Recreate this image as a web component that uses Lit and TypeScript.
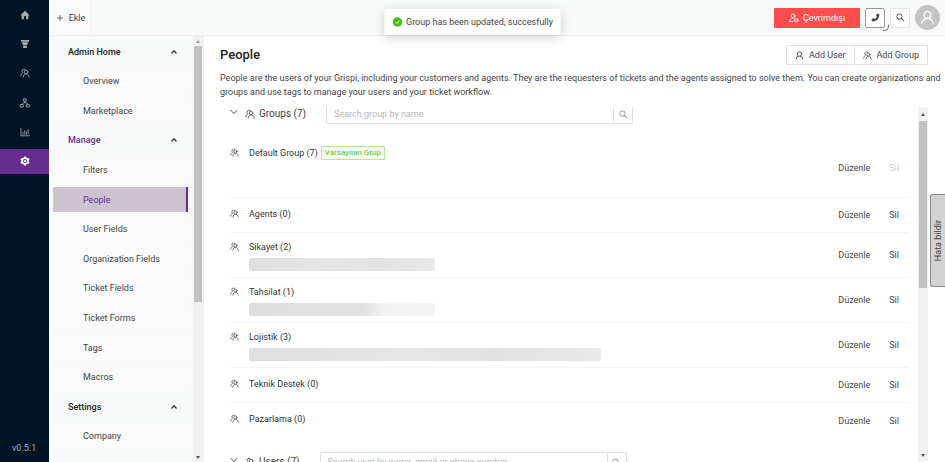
import { LitElement, html, svg, css, nothing } from "lit";
import { customElement, property } from "lit/decorators.js";
import { classMap } from "lit/directives/class-map.js";

const line = (body: unknown) => svg`<g fill="none" stroke="currentColor" stroke-width="1.3" stroke-linecap="round" stroke-linejoin="round">${body}</g>`;

const icons: Record<string, { box: string; body: unknown }> = {
  home: { box: "0 0 16 16", body: svg`<path fill="currentColor" d="M8 1.2 15.4 8.3H13.4V14.6H9.7V10H6.3V14.6H2.6V8.3H.6Z"/>` },
  filter: { box: "0 0 16 16", body: svg`<path fill="currentColor" d="M1 1.500H15L14 4.500H2ZM2.500 5.200H13.500L11 9.600H5ZM5 10.200H11V14.500H5Z"/>` },
  group: {
    box: "0 0 16 16",
    body: line(svg`<circle cx="9.600" cy="6.400" r="2.900"/><path d="M5.200 14.600C5.400 11.400 7 9.300 9.600 9.300S14.400 11.400 14.800 14.600"/><path d="M8.600 2.500A3.200 3.200 0 1 0 4.500 7.500C2.600 8.600 1.500 10.300 1.300 12.800"/>`),
  },
  tree: {
    box: "0 0 16 16",
    body: line(svg`<rect x="6" y="1.400" width="4" height="3.600"/><rect x="1.200" y="10.600" width="4" height="3.800"/><rect x="10.800" y="10.600" width="4" height="3.800"/><path d="M8 5V7.600M3.200 10.600 5.500 7.600H10.500L12.800 10.600"/>`),
  },
  chart: { box: "0 0 16 16", body: line(svg`<path d="M1.500 2V14H15M4.800 11.500V8.500M7.600 11.500V6M10.300 11.500V7.500M13 11.500V4.500"/>`) },
  gear: {
    box: "0 0 16 16",
    body: svg`<path fill="currentColor" fill-rule="evenodd" d="M6.300.8H9.700L10.200 2.900 11.600 3.700 13.600 3.100 15.300 6 13.800 7.400V8.600L15.300 10 13.600 12.900 11.600 12.300 10.200 13.100 9.700 15.200H6.300L5.800 13.100 4.400 12.300 2.400 12.900.7 10 2.200 8.600V7.400L.7 6 2.400 3.100 4.400 3.700 5.800 2.900ZM8 4.900A3.100 3.100 0 1 0 8 11.100 3.100 3.100 0 1 0 8 4.900ZM8 6.300A1.700 1.700 0 1 1 8 9.700 1.700 1.700 0 1 1 8 6.300Z"/>`,
  },
  plus: { box: "0 0 16 16", body: svg`<path fill="none" stroke="currentColor" stroke-width="1.600" d="M8 2V14M2 8H14"/>` },
  up: { box: "0 0 16 16", body: svg`<path fill="none" stroke="currentColor" stroke-width="2.400" d="M3 11 8 5.500 13 11"/>` },
  down: { box: "0 0 16 16", body: svg`<path fill="none" stroke="currentColor" stroke-width="1.800" d="M1.500 4 8 11.500 14.500 4"/>` },
  check: {
    box: "0 0 16 16",
    body: svg`<circle cx="8" cy="8" r="7.600" fill="currentColor"/><path d="M5 8.200 7.200 10.400 11 5.800" fill="none" stroke="#fff" stroke-width="1.400"/>`,
  },
  offline: {
    box: "0 0 16 16",
    body: line(svg`<circle cx="6.500" cy="4.600" r="3"/><path d="M1 13.600C1.200 10.200 3.200 8.200 6.500 8.200L7.700 8.400M1 13.600H6.500"/><circle cx="11.800" cy="11.600" r="2.800"/><path d="M10 13.400 13.600 9.800"/>`),
  },
  phone: {
    box: "0 0 16 16",
    body: svg`<path fill="currentColor" d="M10.700 1 14.600 1.900C14.900 6 13.900 9.300 11.600 11.700 9.200 14.200 6 15.200 1.800 14.800L.9 11.100 5 9.100 6.700 10.900C8.700 9.900 10 8.600 10.800 6.700L9 5Z"/>`,
  },
  search: {
    box: "64 64 896 896",
    body: svg`<path fill="currentColor" d="M909.600 854.500L649.900 594.800C690.200 542.700 712 479 712 412c0-80.200-31.300-155.400-87.900-212.100-56.600-56.700-132-87.900-212.100-87.900s-155.500 31.300-212.100 87.900C143.200 256.500 112 331.800 112 412c0 80.100 31.300 155.500 87.900 212.100C256.500 680.800 331.800 712 412 712c67 0 130.600-21.800 182.700-62l259.700 259.600a8.200 8.200 0 0011.600 0l43.600-43.500a8.200 8.200 0 000-11.600zM570.400 570.400C528 612.700 471.800 636 412 636s-116-23.300-158.400-65.600C211.300 528 188 471.800 188 412s23.300-116.100 65.600-158.400C296 211.300 352.200 188 412 188s116.100 23.200 158.400 65.600S636 352.200 636 412s-23.300 116.100-65.600 158.400z"/>`,
  },
  user: {
    box: "64 64 896 896",
    body: svg`<path fill="currentColor" d="M858.500 763.600a374 374 0 00-80.600-119.500 375.630 375.630 0 00-119.500-80.600c-.4-.2-.8-.3-1.200-.5C719.500 518 760 444.700 760 362c0-137-111-248-248-248S264 225 264 362c0 82.700 40.500 156 102.800 201.100-.4.2-.8.3-1.200.5-44.800 18.900-85 46-119.500 80.600a375.630 375.630 0 00-80.600 119.500A371.700 371.700 0 00136 901.800a8 8 0 008 8.200h60c4.400 0 7.900-3.500 8-7.800 2-77.200 33-149.500 87.800-204.300 56.700-56.700 132-87.900 212.200-87.900s155.500 31.200 212.200 87.900C779 752.700 810 825 812 902.200c.1 4.400 3.600 7.800 8 7.800h60a8 8 0 008-8.200c-1-47.800-10.900-94.300-29.500-138.200zM512 534c-45.900 0-89.100-17.900-121.600-50.400S340 407.900 340 362c0-45.900 17.900-89.100 50.400-121.600S466.100 190 512 190s89.100 17.900 121.600 50.400S684 316.100 684 362c0 45.900-17.900 89.100-50.400 121.600S557.900 534 512 534z"/>`,
  },
};

@customElement("ui-icon")
class UiIcon extends LitElement {
  @property() name = "home";
  static styles = css`
    :host { display: inline-flex; flex: none; width: 9px; height: 9px; }
    svg { width: 100%; height: 100%; display: block; }
  `;
  render() {
    const icon = icons[this.name];
    return html`<svg viewBox=${icon.box} aria-hidden="true">${icon.body}</svg>`;
  }
}

@customElement("scroll-bar")
class ScrollBar extends LitElement {
  @property({ type: Number }) thumb = 50;
  static styles = css`
    :host { display: flex; flex-direction: column; flex: none; width: 10px; background: #f1f1f1; }
    .arrow { display: flex; flex: none; height: var(--arrow-height, 10px); align-items: center; justify-content: center; }
    .arrow::before { content: ""; border: 2px solid transparent; }
    .up::before { border-top-width: 0; border-bottom: 3px solid var(--arrow-up, #505050); }
    .down::before { border-bottom-width: 0; border-top: 3px solid #505050; }
    .track { flex: 1; padding: 0 1px; }
    .thumb { background: #c1c1c1; }
  `;
  render() {
    return html`<div class="arrow up"></div>
      <div class="track"><div class="thumb" style="height:${this.thumb}%"></div></div>
      <div class="arrow down"></div>`;
  }
}

const rail = [
  ["home", "Home"],
  ["filter", "Filters"],
  ["group", "People"],
  ["tree", "Organizations"],
  ["chart", "Reports"],
  ["gear", "Admin"],
];

const menu: { label: string; head?: boolean; current?: boolean }[] = [
  { label: "Admin Home", head: true },
  { label: "Overview" },
  { label: "Marketplace" },
  { label: "Manage", head: true, current: true },
  { label: "Filters" },
  { label: "People", current: true },
  { label: "User Fields" },
  { label: "Organization Fields" },
  { label: "Ticket Fields" },
  { label: "Ticket Forms" },
  { label: "Tags" },
  { label: "Macros" },
  { label: "Settings", head: true },
  { label: "Company" },
];

const groups = [
  { name: "Default Group", count: 7, members: "", isDefault: true },
  { name: "Agents", count: 0, members: "" },
  { name: "Sikayet", count: 2, members: "short" },
  { name: "Tahsilat", count: 1, members: "short fade" },
  { name: "Lojistik", count: 3, members: "long" },
  { name: "Teknik Destek", count: 0, members: "" },
  { name: "Pazarlama", count: 0, members: "" },
];

@customElement("app-root")
class AppRoot extends LitElement {
  static styles = css`
    :host {
      display: flex; position: relative; height: 100vh; overflow: hidden; background: #fff;
      font: 9px/14px Roboto, sans-serif; color: #444;
    }
    * { box-sizing: border-box; }
    button, input { font: inherit; color: inherit; margin: 0; border-radius: 1px; }
    button { display: inline-flex; align-items: center; justify-content: center; padding: 0; border: 0; background: none; white-space: nowrap; }
    a { color: inherit; text-decoration: none; }
    ul { list-style: none; margin: 0; padding: 0; }

    .rail { display: flex; flex-direction: column; justify-content: space-between; flex: none; width: 49px; padding-top: 2px; background: #001428; color: #a6adb4; }
    .rail-nav { display: flex; flex-direction: column; justify-content: space-between; height: 172px; }
    .rail-link { display: flex; align-items: center; justify-content: center; height: 25px; }
    .rail-link ui-icon { width: 10px; height: 10px; }
    .rail-link.current { background: #662d91; color: #fff; }
    .version { padding: 0 0 7px 12px; }

    .page { display: flex; flex-direction: column; flex: 1; min-width: 0; }
    .top { display: flex; flex: none; justify-content: space-between; height: 36px; background: #f8f9f9; border-bottom: 1px solid #f0f0f0; }
    .add { gap: 5px; width: 42px; padding-left: 2px; background: #fafafa; border-right: 1px solid #f0f0f0; }
    .add ui-icon { width: 8px; height: 8px; }
    .tools { display: flex; align-items: center; gap: 5px; padding-right: 5px; }
    .status { gap: 4px; width: 86px; height: 20px; background: #ff4d4f; color: #fff; }
    .status ui-icon { width: 10px; height: 10px; }
    .square { width: 20px; height: 20px; background: #fff; border: 1px solid #e4e4e4; }
    .call { border-color: #999; border-radius: 2px; }
    .dial { position: relative; display: flex; }
    .dial::after { content: ""; position: absolute; right: -4px; bottom: -3px; width: 5px; height: 5px; border: solid #666; border-width: 0 1px 1px 0; border-radius: 0 0 5px 0; }
    .avatar { width: 25px; height: 25px; border-radius: 50%; background: #c4c4c4; color: #fff; }
    .avatar ui-icon { width: 15px; height: 15px; }

    .body { display: flex; flex: 1; min-height: 0; }
    .side { display: flex; flex: none; width: 154px; background: #f8faf9; }
    .side scroll-bar { --arrow-up: #999; }
    .menu { display: flex; flex-direction: column; justify-content: space-between; flex: 1; height: 413px; padding: 3px 5px 0 4px; }
    .item { display: flex; align-items: center; height: 25px; padding-left: 30px; background: #fafafa; }
    .item.current { color: #662d91; background: #cbc3d0; border-right: 2px solid #662d91; }
    .head { display: flex; justify-content: space-between; width: 100%; height: 25px; padding: 0 10px 0 15px; font-weight: 500; color: #222; }
    .head.current { color: #662d91; }
    .head ui-icon { width: 8px; height: 8px; color: #333; }

    main { display: flex; flex-direction: column; flex: 1; min-width: 0; padding: 9px 17px 0 16px; border-left: 1px solid #f0f0f0; }
    .title-row { display: flex; align-items: center; justify-content: space-between; }
    h1 { margin: 0; font-size: 13px; line-height: 18px; font-weight: 500; color: #222; }
    .actions { display: flex; }
    .outlined { gap: 5px; height: 20px; padding: 0 8px; background: #fff; border: 1px solid #e0e0e0; }
    .outlined + .outlined { margin-left: -1px; }
    .intro { margin: 6px -16px 8px 0; }
    .scroller { display: flex; flex: 1; min-height: 0; overflow: hidden; }
    .scroller scroll-bar { --arrow-height: 14px; }
    .list { flex: 1; min-width: 0; padding: 0 9px 0 10px; overflow: hidden; }
    .section { display: flex; align-items: center; height: 20px; font-size: 10px; }
    .first { margin: -3px 0 15px; }
    .last { margin-top: 14px; }
    .section > ui-icon { width: 10px; height: 10px; margin-left: 7px; }
    .toggle { align-self: flex-start; padding-top: 4px; }
    .toggle ui-icon { width: 8px; height: 8px; }
    .section label { margin: 0 20px 0 4px; }
    .search { display: flex; width: 307px; font-size: 9px; }
    .search input { flex: 1; min-width: 0; height: 20px; padding: 0 7px; border: 1px solid #e0e0e0; background: #fff; }
    .search input::placeholder { color: #b5b5b5; opacity: 1; }
    .search button { width: 20px; margin-left: -1px; border: 1px solid #e0e0e0; color: #888; }

    .group { display: flex; align-items: center; justify-content: space-between; height: 45px; border-bottom: 1px solid #f4f4f4; }
    .group.empty { height: 35px; }
    .group.default { height: 59px; }
    .group:last-child { border-bottom: 0; }
    .info { display: flex; gap: 10px; align-self: stretch; padding-top: 7px; }
    .empty .info { padding-top: 9px; }
    .info > ui-icon { margin-top: 2px; }
    .name { display: flex; align-items: center; gap: 3px; color: #333; }
    .tag { padding: 0 3px; font-size: 8px; line-height: 12px; color: #52c41a; background: #f6ffed; border: 1px solid #b7eb8f; border-radius: 1px; }
    .members { height: 13px; margin-top: 4px; border-radius: 2px; background: linear-gradient(90deg, #dfdfdf, #e6e6e6 45%, #e2e2e2 70%, #e9e9e9); }
    .members.short { width: 186px; }
    .members.fade { background: linear-gradient(90deg, #dedede, #e2e2e2 62%, #f2f2f2 72%, #f4f4f4); }
    .members.long { width: 352px; }
    .links { display: flex; gap: 19px; padding-right: 10px; }
    .links button:disabled { color: #ccc; }

    .toast { position: absolute; top: 9px; left: 50%; transform: translateX(-50%); display: flex; align-items: center; gap: 4px; height: 26px; padding: 0 8px; background: #fff; border-radius: 1px; box-shadow: 0 3px 12px rgba(0, 0, 0, .18); white-space: nowrap; }
    .toast ui-icon { width: 10px; height: 10px; color: #43c30f; }
    .feedback { position: absolute; top: 194px; right: 0; width: 15px; height: 93px; background: #d3d3d3; border: 1px solid #888; border-right: 0; border-radius: 3px 0 0 3px; }
    .feedback span { writing-mode: vertical-rl; transform: rotate(180deg); }
  `;

  private section(kind: string, label: string, hint: string) {
    return html`<div class="section ${kind}">
      <button class="toggle" aria-label="Toggle ${label}"><ui-icon name="down"></ui-icon></button>
      <ui-icon name="group"></ui-icon>
      <label for=${kind}>${label}</label>
      <div class="search">
        <input id=${kind} placeholder=${hint} />
        <button aria-label="Search"><ui-icon name="search"></ui-icon></button>
      </div>
    </div>`;
  }

  render() {
    return html`
      <aside class="rail">
        <nav class="rail-nav">
          ${rail.map(([icon, label]) => html`<a class=${classMap({ "rail-link": true, current: icon === "gear" })} href="#" aria-label=${label}><ui-icon name=${icon}></ui-icon></a>`)}
        </nav>
        <div class="version">v0.5.1</div>
      </aside>
      <div class="page">
        <header class="top">
          <button class="add"><ui-icon name="plus"></ui-icon>Ekle</button>
          <div class="tools">
            <button class="status"><ui-icon name="offline"></ui-icon>Çevrimdışı</button>
            <div class="dial"><button class="square call" aria-label="Call"><ui-icon name="phone"></ui-icon></button></div>
            <button class="square" aria-label="Search"><ui-icon name="search"></ui-icon></button>
            <button class="avatar" aria-label="Account"><ui-icon name="user"></ui-icon></button>
          </div>
        </header>
        <div class="body">
          <div class="side">
            <nav class="menu">
              ${menu.map((m) =>
                m.head
                  ? html`<button class=${classMap({ head: true, current: !!m.current })}>${m.label}<ui-icon name="up"></ui-icon></button>`
                  : html`<a class=${classMap({ item: true, current: !!m.current })} href="#">${m.label}</a>`
              )}
            </nav>
            <scroll-bar thumb="63"></scroll-bar>
          </div>
          <main>
            <div class="title-row">
              <h1>People</h1>
              <div class="actions">
                <button class="outlined"><ui-icon name="user"></ui-icon>Add User</button>
                <button class="outlined"><ui-icon name="group"></ui-icon>Add Group</button>
              </div>
            </div>
            <p class="intro">
              People are the users of your Grispi, including your customers and agents. They are the requesters of tickets and
              the agents assigned to solve them. You can create organizations and groups and use tags to manage your users and
              your ticket workflow.
            </p>
            <div class="scroller">
              <div class="list">
                ${this.section("first", "Groups (7)", "Search group by name")}
                <ul>
                  ${groups.map(
                    (g) => html`<li class=${classMap({ group: true, default: !!g.isDefault, empty: !g.isDefault && !g.members })}>
                      <div class="info">
                        <ui-icon name="group"></ui-icon>
                        <div>
                          <div class="name">${g.name} (${g.count})${g.isDefault ? html`<span class="tag">Varsayılan Grup</span>` : nothing}</div>
                          ${g.members ? html`<div class="members ${g.members}"></div>` : nothing}
                        </div>
                      </div>
                      <div class="links">
                        <button>Düzenle</button>
                        <button ?disabled=${!!g.isDefault}>Sil</button>
                      </div>
                    </li>`
                  )}
                </ul>
                ${this.section("last", "Users (7)", "Search user by name, email or phone number")}
              </div>
              <scroll-bar thumb="51"></scroll-bar>
            </div>
          </main>
        </div>
      </div>
      <div class="toast" role="status"><ui-icon name="check"></ui-icon>Group has been updated, succesfully</div>
      <button class="feedback"><span>Hata bildir</span></button>
    `;
  }
}
